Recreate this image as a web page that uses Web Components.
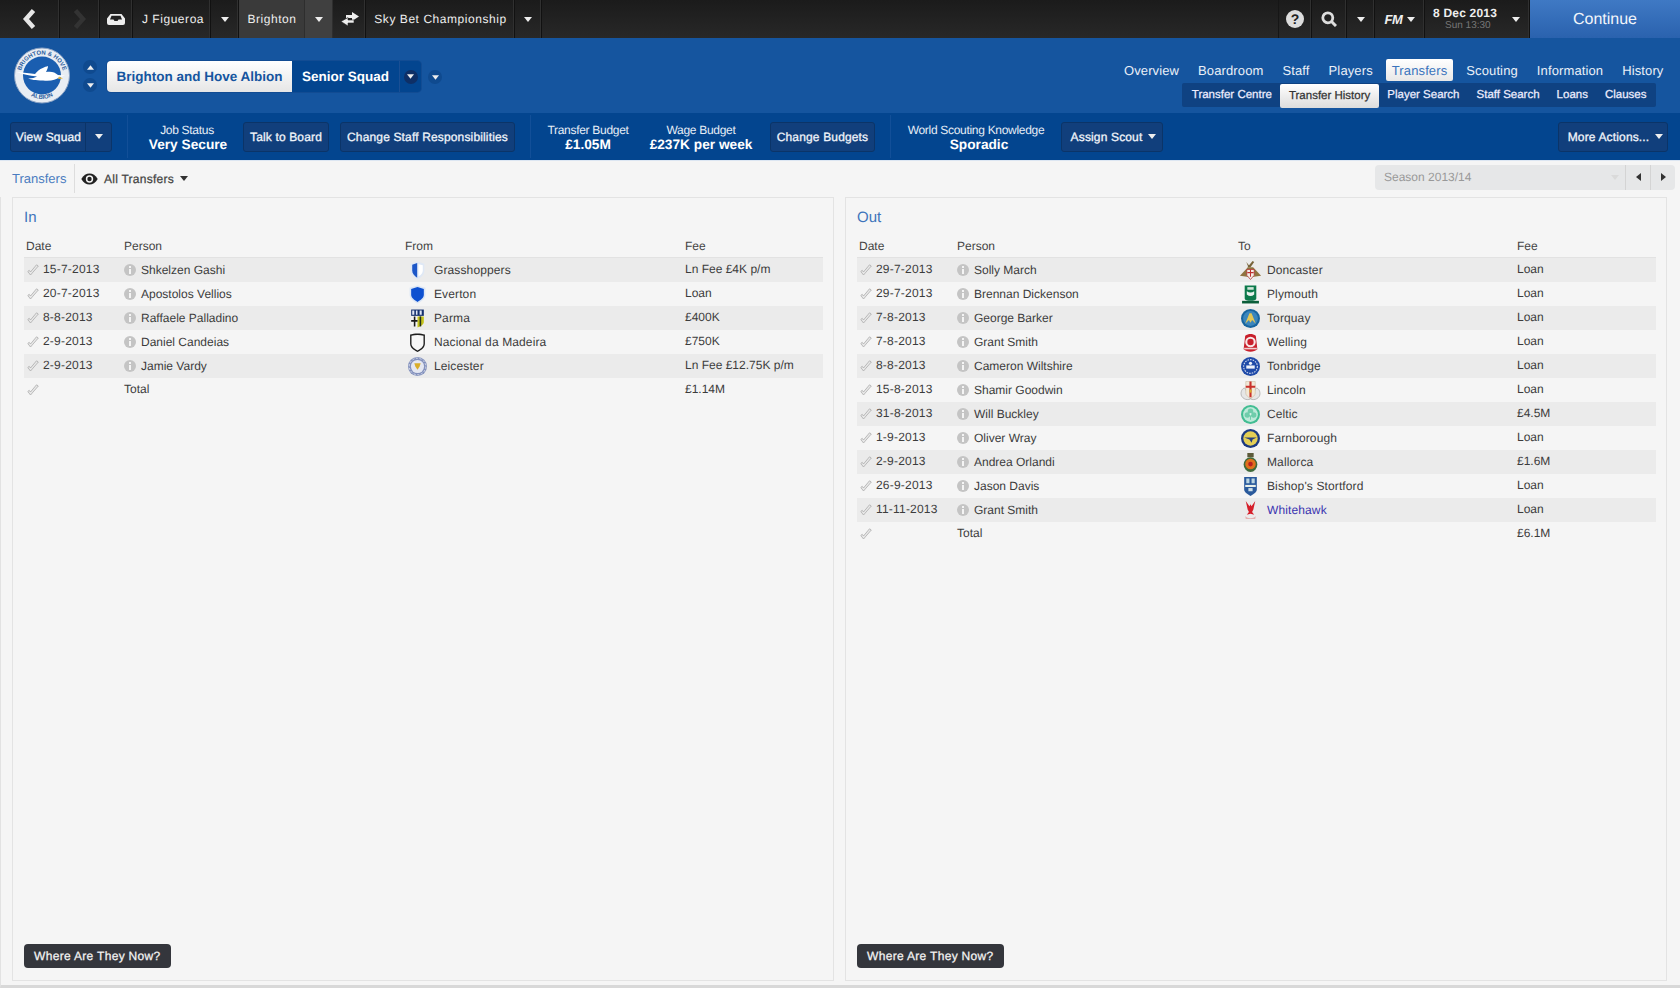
<!DOCTYPE html>
<html>
<head>
<meta charset="utf-8">
<title>Transfers</title>
<style>
html, body { margin: 0; height: 100%; background: #f5f5f5; }
body { display: flex; flex-direction: column; height: 988px; overflow: hidden; font-family: "Liberation Sans", Arial, sans-serif; font-size: 12px; color: #333; text-rendering: geometricPrecision; }
</style>
</head>
<body>
<fm-topbar></fm-topbar>
<fm-clubbar></fm-clubbar>
<fm-actionbar></fm-actionbar>
<fm-filterbar></fm-filterbar>
<fm-content>
  <transfer-panel heading="In" club-label="From" style="--cols: 100px 281px 280px 1fr">
    <transfer-row date="15-7-2013" person="Shkelzen Gashi" club="Grasshoppers" crest="grasshoppers" fee="Ln Fee £4K p/m"></transfer-row>
    <transfer-row date="20-7-2013" person="Apostolos Vellios" club="Everton" crest="everton" fee="Loan"></transfer-row>
    <transfer-row date="8-8-2013" person="Raffaele Palladino" club="Parma" crest="parma" fee="£400K"></transfer-row>
    <transfer-row date="2-9-2013" person="Daniel Candeias" club="Nacional da Madeira" crest="nacional" fee="£750K"></transfer-row>
    <transfer-row date="2-9-2013" person="Jamie Vardy" club="Leicester" crest="leicester" fee="Ln Fee £12.75K p/m"></transfer-row>
    <transfer-row total person="Total" fee="£1.14M"></transfer-row>
  </transfer-panel>
  <transfer-panel heading="Out" club-label="To" style="--cols: 100px 281px 279px 1fr">
    <transfer-row date="29-7-2013" person="Solly March" club="Doncaster" crest="doncaster" fee="Loan"></transfer-row>
    <transfer-row date="29-7-2013" person="Brennan Dickenson" club="Plymouth" crest="plymouth" fee="Loan"></transfer-row>
    <transfer-row date="7-8-2013" person="George Barker" club="Torquay" crest="torquay" fee="Loan"></transfer-row>
    <transfer-row date="7-8-2013" person="Grant Smith" club="Welling" crest="welling" fee="Loan"></transfer-row>
    <transfer-row date="8-8-2013" person="Cameron Wiltshire" club="Tonbridge" crest="tonbridge" fee="Loan"></transfer-row>
    <transfer-row date="15-8-2013" person="Shamir Goodwin" club="Lincoln" crest="lincoln" fee="Loan"></transfer-row>
    <transfer-row date="31-8-2013" person="Will Buckley" club="Celtic" crest="celtic" fee="£4.5M"></transfer-row>
    <transfer-row date="1-9-2013" person="Oliver Wray" club="Farnborough" crest="farnborough" fee="Loan"></transfer-row>
    <transfer-row date="2-9-2013" person="Andrea Orlandi" club="Mallorca" crest="mallorca" fee="£1.6M"></transfer-row>
    <transfer-row date="26-9-2013" person="Jason Davis" club="Bishop's Stortford" crest="bishops" fee="Loan"></transfer-row>
    <transfer-row date="11-11-2013" person="Grant Smith" club="Whitehawk" crest="whitehawk" fee="Loan" link></transfer-row>
    <transfer-row total person="Total" fee="£6.1M"></transfer-row>
  </transfer-panel>
</fm-content>

<script>
const ARROW = c => `<svg width="8" height="5" viewBox="0 0 8 5"><path d="M0 0h8L4 5z" fill="${c || '#eee'}"/></svg>`;

const CRESTS = {
  grasshoppers: `<path d="M9 .5l6.500 2v6.500c0 4-3 6.500-6.500 8.500-3.500-2-6.500-4.500-6.500-8.500V2.500z" fill="#dfe8f5"/><path d="M8.700 2L4 3.500V9c0 3 2 5 4.700 6.800z" fill="#1c57c8"/><path d="M10 3l4 1v5c0 2-1 4-4 5.500z" fill="#fff"/>`,
  everton: `<path d="M9 .5l7.500 2v6.500c0 4-3.500 6.500-7.500 8.500-4-2-7.500-4.500-7.500-8.500V2.500z" fill="#dce6f5"/><path d="M9 2l6 1.700V9c0 3-2.500 5-6 7-3.500-2-6-4-6-7V3.700z" fill="#0d50d0"/>`,
  parma: `<path d="M3 .5h12v12c0 3-3 4-6 5-3-1-6-2-6-5z" fill="#f2f2f2"/><path d="M3 .5h12v6H3z" fill="#15306e"/><path d="M4 1.500h2v4H4zM7.500 1.500h1.500v4H7.500zM11 1.500h2v4h-2z" fill="#dfe6f5"/><path d="M9 7h6v5.500c0 2-3 4-6 5z" fill="#c3c21c"/><path d="M11 7h1.500v9.500H11z" fill="#25301a"/><path d="M5.500 7h1.500v9.500H5.500zM3 10.500h6V12H3z" fill="#1a1a1a"/>`,
  nacional: `<path d="M2 1.500C6 0 12 0 16 1.500V10c0 4-3 6-7 8-4-2-7-4-7-8z" fill="#1d1d1d"/><path d="M3.300 2.500c3.600-.9 7.800-.9 11.400 0V10c0 3-2.400 4.800-5.700 6.500C5.700 14.800 3.300 13 3.300 10z" fill="#f7f7f7"/>`,
  leicester: `<circle cx="9" cy="9" r="9" fill="#8391bd"/><circle cx="9" cy="9" r="6.200" fill="#e4e7f1"/><path d="M6 6h6l-1 3-2 3-2-3z" fill="#d9ad2a"/><circle cx="9" cy="9" r="7.800" fill="none" stroke="#e2e6f0" stroke-width=".8" stroke-dasharray="2 1.500"/>`,
  doncaster: `<path d="M-1 14L6.500 6h5L19 14l-10 1.500z" fill="#8f7440"/><path d="M6 6l5-6 1.500 1L9 6zM5 1l4 5H7z" fill="#77643a"/><path d="M5.500 8h7v5.500L9 17.500l-3.500-4z" fill="#f3f0ea" stroke="#b03030" stroke-width=".7"/><path d="M9 8v7M6 11h6" stroke="#c03030"/>`,
  plymouth: `<path d="M3.500 .5h11v12c0 2-2.500 2.500-5.500 2.500s-5.500-.5-5.500-2.500z" fill="#0d7a4c"/><path d="M5.500 6c2.300 1.500 4.700 1.500 7 0v3c-2.300 2-4.700 2-7 0z" fill="#e9f3ee"/><path d="M6 2h6v2.500H6z" fill="#cfe6d9"/><path d="M1 15h16v2.500H1z" fill="#0b5e3a"/>`,
  torquay: `<circle cx="9" cy="9" r="9" fill="#17659f"/><circle cx="9" cy="9" r="7" fill="#3b86bd"/><path d="M4 14l4-10h2l4 10-3.500-3.500L9 13l-1.500-2.500z" fill="#e2c657"/>`,
  welling: `<path d="M4 2.500c3-2 7-2 10 0l1.500 13c-3 3-10 3-13 0z" fill="#c81f2b"/><circle cx="9" cy="8.500" r="5" fill="#f7e7e7"/><circle cx="9" cy="8.500" r="3" fill="#c81f2b"/><path d="M3 14h12v1.500H3z" fill="#f0d0d0"/>`,
  tonbridge: `<circle cx="9" cy="9" r="9" fill="#1f4aa8"/><circle cx="9" cy="9" r="6.500" fill="none" stroke="#d8e0f0" stroke-width="1" stroke-dasharray="1.500 1"/><path d="M5 8h8v3H5z" fill="#eef2fa"/><circle cx="9" cy="6" r="1.500" fill="#eef2fa"/>`,
  lincoln: `<path d="M0 12c0-3 2-6 4-5l5 10c-4 2-9-1-9-5zM18 12c0-3-2-6-4-5L9 17c4 2 9-1 9-5z" fill="#e6e6e6" stroke="#999" stroke-width=".6"/><path d="M4.500 .5h9v11c0 2-2.500 4-4.500 5-2-1-4.500-3-4.500-5z" fill="#f2e8d8" stroke="#b9a98a" stroke-width=".4"/><path d="M8 .5h2v15H8zM4.500 4.500h9v2h-9z" fill="#c9302c"/><path d="M8 8h2v3H8z" fill="#d9ad2a"/>`,
  celtic: `<circle cx="9" cy="9" r="9" fill="#42bd92"/><circle cx="9" cy="9" r="7" fill="#bdeAd9"/><g fill="#6fcdab"><circle cx="9" cy="6" r="2.600"/><circle cx="6" cy="9.500" r="2.600"/><circle cx="12" cy="9.500" r="2.600"/></g><circle cx="9" cy="8.500" r="1" fill="#d9f3e9"/><path d="M8.500 10h1v4h-1z" fill="#6fcdab"/>`,
  farnborough: `<circle cx="9" cy="9" r="9" fill="#1c3a80"/><circle cx="9" cy="9" r="6.800" fill="#e4cf55"/><path d="M3 8h12l-4 2-1 3-2-3z" fill="#27407f"/>`,
  mallorca: `<path d="M6 0h6v4H6z" fill="#5c5a3a"/><ellipse cx="9" cy="11" rx="6.500" ry="7" fill="#3f6a3a"/><circle cx="9" cy="10.500" r="5" fill="#e0701c"/><circle cx="9" cy="10.500" r="2.200" fill="#b82020"/>`,
  bishops: `<path d="M3 0h12v12c0 2-3 4-6 6-3-2-6-4-6-6z" fill="#2a5a9c"/><path d="M5 1.500h3v4.500H5zM10 1.500h3v4.500h-3z" fill="#bcd6e2"/><path d="M4 7.500h10v2H4z" fill="#e9f0e9"/><path d="M7 10.500h4v3H7z" fill="#cfe0e8"/>`,
  whitehawk: `<path d="M4.500 0l3.500 5 1-2 1 2 3.500-5-1.800 8-1.200 2.500 2 2.500-3.500-1-3.500 1 2-2.500L6.300 8z" fill="#d51f2a"/><path d="M4 14.500c2.500 2.500 7.500 2.500 10 0l-.5 2.500h-9z" fill="#e4b0b0"/>`
};

function makeShadow(el, html) {
  el.attachShadow({ mode: 'open' }).innerHTML = html;
}

class FmCrest extends HTMLElement {
  connectedCallback() {
    makeShadow(this, `<style>:host { display: inline-flex; width: 19px; height: 19px; flex: none; } svg { overflow: visible; }</style>
      <svg width="19" height="19" viewBox="0 0 18 18">${CRESTS[this.getAttribute('name')] || ''}</svg>`);
  }
}

class FmTopbar extends HTMLElement {
  connectedCallback() {
    makeShadow(this, `<style>
      :host { display: flex; flex: none; height: 38px; background: linear-gradient(#1b1b1b, #282828); color: #eee; font-size: 12px; letter-spacing: .55px; }
      .c { display: flex; align-items: center; justify-content: center; box-sizing: border-box; border-right: 1px solid #111; box-shadow: inset -1px 0 0 #303030; height: 38px; flex: none; }
      .sel { background: #3a3a3a; border-color: #2e2e2e; box-shadow: none; }
      .selb { background: #404040; }
      .sp { flex: 1; border-right: 1px solid #161616; }
      .cont { width: 150px; padding-top: 1px; background: linear-gradient(#3f79c4, #2a62ae); color: #f2f6fb; font-size: 16px; letter-spacing: 0; border: 0; box-shadow: none; }
      .date { justify-content: space-between; padding: 0 9px 0 8px; }
      .stack { line-height: 13px; font-weight: 700; letter-spacing: .2px; }
      .stack small { display: block; font-size: 10px; font-weight: 400; color: #777; letter-spacing: 0; padding-left: 12px; line-height: 12px; }
      .fm { font-weight: 700; font-style: italic; font-size: 13px; gap: 4px; letter-spacing: -.3px; }
      .help { width: 18px; height: 18px; border-radius: 50%; background: #ddd; color: #222; font-weight: 700; font-size: 14px; text-align: center; line-height: 18px; letter-spacing: 0; }
    </style>
    <div class="c" style="width:60px"><svg width="15" height="22" viewBox="0 0 15 22"><path d="M11.500 2.500L4 11l7.500 8.500" fill="none" stroke="#e6e6e6" stroke-width="4.500"/></svg></div>
    <div class="c" style="width:40px"><svg width="15" height="22" viewBox="0 0 15 22"><path d="M3.500 2.500L11 11l-7.500 8.500" fill="none" stroke="#333" stroke-width="4.500"/></svg></div>
    <div class="c" style="width:33px"><svg width="18" height="11" viewBox="0 0 18 11"><path d="M3.500 0h11L18 4.500V9a2 2 0 0 1-2 2H2a2 2 0 0 1-2-2V4.500zM4.500 1.800L3 5.500h3.500l1 1.500h3l1-1.500H15l-1.500-3.700z" fill="#eee" fill-rule="evenodd"/></svg></div>
    <div class="c" style="width:78px;padding-left:3px">J Figueroa</div>
    <div class="c" style="width:28px">${ARROW()}</div>
    <div class="c sel" style="width:66px;padding-left:1px">Brighton</div>
    <div class="c sel selb" style="width:28px">${ARROW()}</div>
    <div class="c" style="width:33px;padding-left:2px"><svg width="18" height="14" viewBox="0 0 18 14"><path d="M11 0l7 4.500L11 9V6H5V3h6z" fill="#eee"/><path d="M7 5.500V8h6v3H7v3L0 9.500z" fill="#eee" stroke="#252525" stroke-width=".6"/></svg></div>
    <div class="c" style="width:149px;padding-left:1px">Sky Bet Championship</div>
    <div class="c" style="width:27px">${ARROW()}</div>
    <div class="sp"></div>
    <div class="c" style="width:33px"><div class="help">?</div></div>
    <div class="c" style="width:35px"><svg width="16" height="16" viewBox="0 0 16 16"><circle cx="6.800" cy="6.800" r="5" fill="none" stroke="#ddd" stroke-width="2.800"/><path d="M10.500 10.500L15 15" stroke="#ddd" stroke-width="3"/></svg></div>
    <div class="c" style="width:28px">${ARROW()}</div>
    <div class="c fm" style="width:50px">FM ${ARROW()}</div>
    <div class="c date" style="width:105px"><div class="stack">8 Dec 2013<small>Sun 13:30</small></div>${ARROW()}</div>
    <div class="c cont">Continue</div>`);
  }
}

class FmClubbar extends HTMLElement {
  connectedCallback() {
    const tabs = ['Overview', 'Boardroom', 'Staff', 'Players', 'Transfers', 'Scouting', 'Information', 'History'];
    const subs = ['Transfer Centre', 'Transfer History', 'Player Search', 'Staff Search', 'Loans', 'Clauses'];
    makeShadow(this, `<style>
      :host { display: flex; flex: none; height: 75px; background: #15559f; color: #fff; align-items: flex-start; }
      .logo { margin: 9px 0 0 14px; width: 56px; height: 57px; flex: none; }
      .updown { display: flex; flex-direction: column; gap: 4px; margin: 22px 0 0 13px; flex: none; }
      .dot { width: 14px; height: 14px; border-radius: 50%; background: #0f4a8f; display: flex; align-items: center; justify-content: center; }
      .dot svg { width: 7px; }
      .up svg { transform: rotate(180deg); }
      .title { display: flex; margin: 23px 0 0 10px; height: 31px; border-radius: 4px; overflow: hidden; font-size: 13.500px; font-weight: 700; line-height: 31px; flex: none; background: #03458f; box-shadow: 0 0 0 1px #124c93; }
      .name { width: 185px; text-align: center; background: linear-gradient(#fff, #e6e6e6); color: #15559f; }
      .squad { width: 107px; text-align: center; border-right: 1px solid #1a4f94; }
      .drop { width: 21px; display: flex; align-items: center; justify-content: center; }
      .more { margin: 32px 0 0 7px; width: 14px; height: 14px; flex: none; }
      .nav { margin-left: auto; display: flex; flex-direction: column; align-items: flex-end; padding: 21px 24px 0 0; }
      .tabs { display: flex; font-size: 13px; height: 22px; line-height: 23px; color: #eaf0f8; margin-right: -17px; letter-spacing: .12px; }
      .tabs span { padding: 0 6px; margin: 0 3.500px; }
      .tabs .on { background: linear-gradient(#fff, #e8e8e8); color: #3a74bd; border-radius: 2px; }
      .subs { display: flex; margin-top: 2px; height: 24px; background: #0f4282; border-radius: 2px; font-size: 11.500px; line-height: 24px; padding: 0 1px; color: #eef; -webkit-text-stroke: .25px currentColor; }
      .subs span { padding: 0 8.500px; }
      .subs .on { background: linear-gradient(#fff, #dcdcdc); color: #333; border-radius: 2px; margin: 1px 0 -1px; }
    </style>
    <svg class="logo" viewBox="0 0 56 57">
      <defs><path id="arcT" d="M6.500 29a21.500 21.500 0 0 1 43 0"/><path id="arcB" d="M13 46a22 22 0 0 0 30 0"/></defs>
      <circle cx="28" cy="28.500" r="27.500" fill="#e8edf3" stroke="#8aa2c4" stroke-width="1"/>
      <circle cx="28" cy="28.500" r="19" fill="#1a5eb0"/>
      <text font-family="Liberation Sans" font-size="6" font-weight="700" fill="#2c5e9e"><textPath href="#arcT" startOffset="50%" text-anchor="middle">BRIGHTON &amp; HOVE</textPath></text>
      <text font-family="Liberation Sans" font-size="6" font-weight="700" fill="#2c5e9e"><textPath href="#arcB" startOffset="50%" text-anchor="middle">ALBION</textPath></text>
      <path d="M2 25c8 1 14 1 19 2 5-6 10-7 13-8 0 2-1 4-2 6 5-1 9 0 12 3l7 .5-6 2c-3 2-8 4-16 3-8 0-12-1-15-2 4 0 7-1 9-2-8-1-14-2-21-4.500z" fill="#fff"/>
      <path d="M45 29.500l4 2-5 .5z" fill="#e8b83a"/>
    </svg>
    <div class="updown"><div class="dot up">${ARROW()}</div><div class="dot">${ARROW()}</div></div>
    <div class="title">
      <div class="name">Brighton and Hove Albion</div>
      <div class="squad">Senior Squad</div>
      <div class="drop"><div class="dot" style="background:#0e2f66">${ARROW()}</div></div>
    </div>
    <div class="more dot">${ARROW()}</div>
    <div class="nav">
      <div class="tabs">${tabs.map(t => `<span class="${t == 'Transfers' ? 'on' : ''}">${t}</span>`).join('')}</div>
      <div class="subs">${subs.map(t => `<span class="${t == 'Transfer History' ? 'on' : ''}">${t}</span>`).join('')}</div>
    </div>`);
  }
}

class FmButton extends HTMLElement {
  connectedCallback() {
    makeShadow(this, `<style>
      :host { display: inline-flex; align-items: center; justify-content: center; box-sizing: border-box; height: 30px; flex: none; background: #113f7c; border: 1px solid #0b3468; border-radius: 3px; color: #f0f4fa; font-size: 12px; letter-spacing: .15px; -webkit-text-stroke: .3px currentColor; gap: 6px; }
    </style><slot></slot>`);
  }
}

class FmStat extends HTMLElement {
  connectedCallback() {
    const shift = this.getAttribute('shift') || 0;
    makeShadow(this, `<style>
      :host { display: flex; flex-direction: column; align-items: center; flex: none; color: #fff; text-align: center; white-space: nowrap; }
      .l { font-size: 12px; line-height: 14px; margin-top: 1px; color: #e6edf6; letter-spacing: -.3px; }
      .v { font-size: 13.700px; font-weight: 700; line-height: 15px; padding-left: ${shift}px; }
    </style><div class="l">${this.getAttribute('label')}</div><div class="v">${this.getAttribute('value')}</div>`);
  }
}

class FmActionbar extends HTMLElement {
  connectedCallback() {
    makeShadow(this, `<style>
      :host { display: flex; flex: none; height: 48px; background: #03458f; align-items: center; box-sizing: border-box; padding: 0 12px 0 10px; border-bottom: 1px solid #dce6f2; }
      .sep { width: 1px; height: 43px; background: #124f98; flex: none; }
      .split { display: flex; width: 100%; height: 100%; align-items: center; }
      .split b { flex: 1; text-align: center; font-weight: 400; padding-left: 1px; }
      .split i { width: 25px; height: 100%; border-left: 1px solid #0b3468; display: flex; align-items: center; justify-content: center; }
    </style>
    <fm-button style="width:102px"><div class="split"><b>View Squad</b><i>${ARROW()}</i></div></fm-button>
    <div class="sep" style="margin-left:15px"></div>
    <fm-stat label="Job Status" value="Very Secure" shift="2" style="width:98px;margin-left:10px"></fm-stat>
    <fm-button style="width:86px;margin-left:7px">Talk to Board</fm-button>
    <fm-button style="width:175px;margin-left:11px">Change Staff Responsibilities</fm-button>
    <div class="sep" style="margin-left:15px"></div>
    <fm-stat label="Transfer Budget" value="£1.05M" style="width:100px;margin-left:7px"></fm-stat>
    <fm-stat label="Wage Budget" value="£237K per week" style="width:100px;margin-left:13px"></fm-stat>
    <fm-button style="width:105px;margin-left:19px">Change Budgets</fm-button>
    <div class="sep" style="margin-left:15px"></div>
    <fm-stat label="World Scouting Knowledge" value="Sporadic" shift="6" style="width:140px;margin-left:15px"></fm-stat>
    <fm-button style="width:102px;margin-left:15px;padding-left:3px">Assign Scout ${ARROW()}</fm-button>
    <fm-button style="width:110px;margin-left:auto;padding-left:5px">More Actions... ${ARROW()}</fm-button>`);
  }
}

class FmFilterbar extends HTMLElement {
  connectedCallback() {
    makeShadow(this, `<style>
      :host { display: flex; flex: none; height: 36px; align-items: center; box-sizing: border-box; padding: 3px 5px 4px 12px; background: #f5f5f5; }
      .crumb { color: #4a7cc0; font-size: 13px; line-height: 29px; width: 62px; border-right: 1px solid #ddd; flex: none; }
      .eye { margin-left: 6px; flex: none; }
      .all { margin-left: 6px; font-size: 12px; color: #444; display: flex; align-items: center; gap: 6px; letter-spacing: .25px; -webkit-text-stroke: .25px currentColor; }
      .season { margin-left: auto; margin-top: -3px; width: 300px; height: 25px; flex: none; display: flex; align-items: center; background: #e6e7e8; border-radius: 4px; font-size: 12px; color: #999; line-height: 25px; }
      .season .t { flex: 1; padding-left: 9px; }
      .season .b { width: 25px; height: 25px; border-left: 1px solid #d4d4d4; display: flex; align-items: center; justify-content: center; box-sizing: border-box; }
    </style>
    <div class="crumb">Transfers</div>
    <svg class="eye" width="17" height="12" viewBox="0 0 17 12"><path d="M.3 6C2.500 2.300 5.300.5 8.500.5S14.500 2.300 16.700 6c-2.200 3.700-5 5.500-8.200 5.500S2.500 9.700.3 6z" fill="#222"/><circle cx="8.500" cy="6" r="3.700" fill="#f5f5f5"/><circle cx="8.500" cy="6" r="2.200" fill="#222"/></svg>
    <div class="all">All Transfers ${ARROW('#333')}</div>
    <div class="season"><div class="t">Season 2013/14</div>
      <svg width="8" height="5" viewBox="0 0 8 5" style="margin-right:6px"><path d="M0 0h8L4 5z" fill="#dadada"/></svg>
      <div class="b"><svg width="5" height="8" viewBox="0 0 5 8"><path d="M5 0v8L0 4z" fill="#333"/></svg></div>
      <div class="b"><svg width="5" height="8" viewBox="0 0 5 8"><path d="M0 0v8l5-4z" fill="#333"/></svg></div>
    </div>`);
  }
}

class FmContent extends HTMLElement {
  connectedCallback() {
    makeShadow(this, `<style>
      :host { display: flex; flex: 1; min-height: 0; gap: 11px; padding: 0 13px 4px 11px; background: #f5f5f5; border-left: 1px solid #e2e2e2; border-bottom: 3px solid #d8d8d8; box-sizing: border-box; }
    </style><slot></slot>`);
  }
}

class TransferPanel extends HTMLElement {
  connectedCallback() {
    makeShadow(this, `<style>
      :host { display: flex; flex-direction: column; flex: 1 1 0; min-width: 0; box-sizing: border-box; border: 1px solid #e3e3e3; padding: 0 10px 12px 11px; background: #f5f5f5; }
      h2 { margin: 11px 0 0; font-size: 15px; font-weight: 400; line-height: 18px; color: #3e74bb; }
      .head { display: grid; grid-template-columns: var(--cols); margin-top: 10px; height: 20px; line-height: 19px; font-size: 12px; color: #444; border-bottom: 1px solid #e2e2e2; }
      .head span:first-child { padding-left: 2px; }
      .rows { display: flex; flex-direction: column; }
      .now { margin-top: auto; align-self: flex-start; height: 24px; line-height: 24px; padding: 0 10px; background: #34363c; color: #f4f4f4; border-radius: 4px; font-size: 12px; letter-spacing: .32px; -webkit-text-stroke: .25px currentColor; }
      ::slotted(transfer-row:nth-of-type(odd)) { background: #ebebeb; }
    </style>
    <h2>${this.getAttribute('heading')}</h2>
    <div class="head"><span>Date</span><span>Person</span><span>${this.getAttribute('club-label')}</span><span>Fee</span></div>
    <div class="rows"><slot></slot></div>
    <div class="now">Where Are They Now?</div>`);
  }
}

class TransferRow extends HTMLElement {
  connectedCallback() {
    const a = n => this.getAttribute(n) || '';
    const total = this.hasAttribute('total');
    makeShadow(this, `<style>
      :host { display: grid; grid-template-columns: var(--cols); height: 24px; align-items: center; font-size: 12px; color: #3c3c3c; }
      .cell { display: flex; align-items: center; min-width: 0; white-space: nowrap; }
      .date { padding-left: 3px; gap: 4px; }
      .date span { letter-spacing: .2px; }
      .up { position: relative; top: -1px; }
      .person { gap: 5px; }
      .club { padding-left: 3px; gap: 7px; }
      .club span { letter-spacing: .12px; }
      .link { color: #3a34b0; }
      .total-row { position: relative; top: -1px; }
    </style>
    <div class="cell date">
      <svg width="12" height="12" viewBox="0 0 12 12"><path d="M.8 7.500l2.700 3.500L11.300 2 9.500.8 3.500 8 2.200 6.300z" fill="#e8e8e8" stroke="#a4a4a4" stroke-width=".7"/></svg>
      <span class="up">${a('date')}</span>
    </div>
    <div class="cell person ${total ? 'total-row' : ''}">
      ${total ? '' : `<svg width="12" height="12" viewBox="0 0 12 12"><circle cx="6" cy="6" r="6" fill="#c4c4c4"/><rect x="5" y="2" width="2" height="2" fill="#f4f4f4"/><rect x="5" y="5" width="2" height="5" fill="#f4f4f4"/></svg>`}
      <span>${a('person')}</span>
    </div>
    <div class="cell club ${this.hasAttribute('link') ? 'link' : ''}">
      ${total ? '' : `<fm-crest name="${a('crest')}"></fm-crest>`}<span>${a('club')}</span>
    </div>
    <div class="cell fee up">${a('fee')}</div>`);
  }
}

customElements.define('fm-crest', FmCrest);
customElements.define('fm-topbar', FmTopbar);
customElements.define('fm-clubbar', FmClubbar);
customElements.define('fm-button', FmButton);
customElements.define('fm-stat', FmStat);
customElements.define('fm-actionbar', FmActionbar);
customElements.define('fm-filterbar', FmFilterbar);
customElements.define('fm-content', FmContent);
customElements.define('transfer-panel', TransferPanel);
customElements.define('transfer-row', TransferRow);
</script>
</body>
</html>
